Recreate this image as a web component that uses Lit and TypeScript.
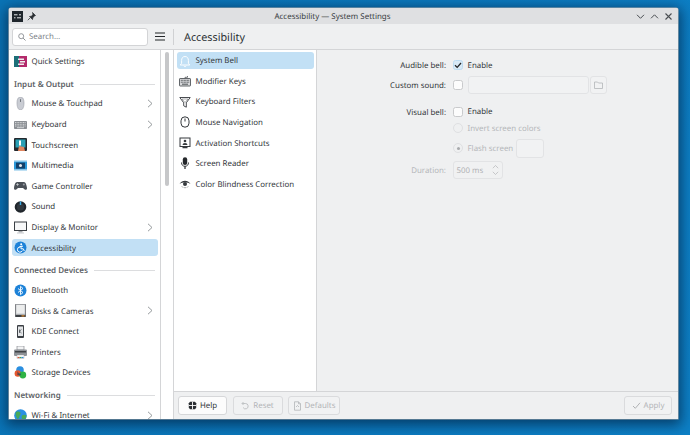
import { LitElement, html, css, svg } from "lit";
import { customElement } from "lit/decorators.js";

const sideIcons: Record<string, unknown> = {
  quick: svg`<path d="M0 1h13v11H0z" fill="#1e9a8c" opacity=".55"/><path d="M5 1h8v11H5z" fill="#b32a6b"/><path d="M0 1h5v11H0z" fill="#1c6f78"/><path d="M4 3.500h6v1.400H4zM6 6h5v1.400H6zM4 8.500h6v1.400H4z" fill="#eee"/>`,
  mouse: svg`<path d="M6.500 0C4 0 3 2.500 3 6s1 7 3.500 7S10 9.500 10 6 9 0 6.500 0z" fill="#c9ccd3" stroke="#9a9ea7" stroke-width=".6"/><rect x="6" y="2" width="1" height="3" rx=".5" fill="#6f747c"/>`,
  keyboard: svg`<rect x="0" y="3" width="13" height="8" rx=".8" fill="#8b8f94"/><path d="M1 4.500h11M1 6.300h11M1 8h11" stroke="#e6e7e9" stroke-width=".8" stroke-dasharray="1 .6"/><path d="M3 9.700h7" stroke="#e6e7e9" stroke-width=".8"/>`,
  touch: svg`<rect x="0" y="0" width="13" height="13" rx="1" fill="#23282d"/><rect x="1.500" y="1.500" width="10" height="8" fill="#2aa0b5"/><rect x="5" y="2.500" width="2" height="5" fill="#fff"/><path d="M4 13l1-5 5 1 1 4z" fill="#e0855e"/>`,
  media: svg`<rect x="0" y="1" width="13" height="11" fill="#2b98d8"/><rect x="0" y="1" width="13" height="1.600" fill="#fff" opacity=".7"/><rect x="0" y="10.400" width="13" height="1.600" fill="#fff" opacity=".7"/><rect x="2" y="3.600" width="9" height="6" fill="#13406a"/><circle cx="6.500" cy="6.600" r="1.500" fill="#e6e9ec"/>`,
  game: svg`<path d="M3 3h7c1.600 0 2.600 2.800 3 6 .2 1.800-1.400 2.400-2.600 1.200L9 9H4l-1.400 1.200C1.400 11.400-.2 10.800 0 9c.4-3.200 1.400-6 3-6z" fill="#4b5158"/><circle cx="9.800" cy="5.500" r="1" fill="#9aa0a6"/><path d="M2.300 5.500h2.400M3.500 4.300v2.400" stroke="#c5c8cb" stroke-width=".9"/>`,
  sound: svg`<circle cx="6.500" cy="7" r="5.800" fill="#20262c"/><circle cx="6.500" cy="7" r="3.600" fill="#31383f"/><path d="M6.500 1.500v3.500" stroke="#3daee9" stroke-width="1.400"/>`,
  display: svg`<rect x=".5" y="1" width="12" height="8.500" fill="#f7f8f9" stroke="#3a3f44" stroke-width="1"/><rect x="4.500" y="10" width="4" height="1.500" fill="#a8abaf"/><rect x="3" y="11.500" width="7" height="1" fill="#c8cacd"/>`,
  access: svg`<circle cx="6.500" cy="6.500" r="6" fill="#1d82d8"/><circle cx="7.200" cy="3.300" r="1" fill="#fff"/><path d="M7 4.800v3h2.300l1 2.200M6 6a2.600 2.600 0 1 0 2.400 3.600M5.500 5.600l3.500-.4" fill="none" stroke="#fff" stroke-width="1"/>`,
  bluetooth: svg`<circle cx="6.500" cy="6.500" r="6" fill="#1d82d8"/><path d="M4 4.500l5 4-2.500 2.200V2.300L9 4.500l-5 4" fill="none" stroke="#fff" stroke-width=".9"/>`,
  disks: svg`<rect x="1.500" y="0" width="10" height="13" rx=".6" fill="#c9cbce" stroke="#54585c" stroke-width=".7"/><rect x="2.500" y="1" width="8" height="8.500" fill="#eceded"/><rect x="1.500" y="10.800" width="10" height="2.200" fill="#3d4145"/><rect x="7.500" y="11.300" width="3" height="1.200" fill="#e08a2f"/>`,
  connect: svg`<rect x="3" y="0" width="7" height="13" rx="1" fill="#3c4045"/><rect x="4" y="1.500" width="5" height="9.500" fill="#e4e6e8"/><path d="M5.500 4.500v3.500M5.500 6.200l2-1.800M5.500 6.200l2 1.800" stroke="#3c4045" stroke-width=".7" fill="none"/>`,
  printer: svg`<rect x="3" y="0" width="7" height="4" fill="#f2f3f4" stroke="#777b80" stroke-width=".6"/><rect x="0" y="3.500" width="13" height="6.500" rx="1" fill="#8e9297"/><rect x="1" y="5" width="11" height="1.500" fill="#3f4347"/><rect x="3" y="9" width="7" height="3.500" fill="#fff" stroke="#999" stroke-width=".4"/><path d="M3.500 11.500h2" stroke="#e0553c" stroke-width="1.200"/><path d="M5.500 11.500h2" stroke="#3fa14a" stroke-width="1.200"/><path d="M7.500 11.500h2" stroke="#2c88d8" stroke-width="1.200"/>`,
  storage: svg`<circle cx="6" cy="4" r="3.800" fill="#2b8fe0"/><circle cx="3.800" cy="7.500" r="3.200" fill="#e4572e"/><circle cx="8.800" cy="9" r="3.400" fill="#2fb344"/><path d="M3.500 5.300a3.800 3.800 0 0 0 3.700 2.500l-.8 1.700-3.100-.6z" fill="#1f3a5c" opacity=".7"/>`,
  wifi: svg`<circle cx="6.500" cy="6.500" r="6.300" fill="#2a8fe2"/><path d="M2 3c2-.8 3.500-.5 4.500.8.500 1.500-.8 2.200-1 3.500-.2 1.400-1 2.500-1.800 2.800C2.500 8.500.8 6 2 3zM8 6.500c1.500-1 3.200-.9 4.500 0 0 2.600-1.600 4.800-3.500 5.600C8.500 10.500 7 8.500 8 6.500z" fill="#47a95b"/>`,
};

const midIcons: Record<string, unknown> = {
  bell: svg`<path d="M6 1.500c2.400 0 3.400 1.800 3.400 4v2.800L10.800 10H1.200l1.400-1.700V5.500c0-2.200 1-4 3.400-4zM4.800 10.800a1.300 1.300 0 0 0 2.400 0" fill="none" stroke="#fbfdfe" stroke-width="1"/>`,
  keys: svg`<path d="M6 3.500V2.300h2.500V1" fill="none" stroke="#3f4448" stroke-width=".7"/><rect x=".5" y="3.500" width="11" height="7.500" rx=".6" fill="#d8d9db" stroke="#3f4448" stroke-width=".8"/><path d="M1.800 5.300h8.400M1.800 7.200h8.400" stroke="#3f4448" stroke-width=".9" stroke-dasharray="1 .5"/><path d="M3 9.200h6" stroke="#3f4448" stroke-width=".9"/>`,
  filter: svg`<path d="M.8 1.500h10.400L7.300 6.800v4.400L4.700 9.800V6.800z" fill="none" stroke="#35393d" stroke-width=".9"/><path d="M3 3h6l-3 3.600z" fill="#fff" stroke="#35393d" stroke-width=".4"/>`,
  mouse: svg`<rect x="2" y=".8" width="8" height="10.400" rx="4" fill="none" stroke="#35393d" stroke-width="1"/><path d="M6 2.500v3" stroke="#35393d" stroke-width="1"/>`,
  act: svg`<rect x="1" y="1" width="10" height="8.500" fill="none" stroke="#35393d" stroke-width="1"/><circle cx="6" cy="4" r="1.300" fill="#35393d"/><path d="M3.500 8a2.500 2 0 0 1 5 0z" fill="#35393d"/><path d="M3.500 10h5v1.200h-5z" fill="#35393d"/>`,
  mic: svg`<rect x="3.800" y=".3" width="4.400" height="7.700" rx="2.200" fill="#24282b"/><path d="M2.500 5.500c0 2.400 1.400 3.800 3.500 3.800s3.500-1.400 3.500-3.800" fill="none" stroke="#24282b" stroke-width=".9"/><path d="M6 9.300V12" stroke="#24282b" stroke-width="1.200"/>`,
  eye: svg`<path d="M.5 6C2 3.800 3.800 2.800 6 2.800S10 3.800 11.500 6C10 5 8 4.200 6 4.200S2 5 .5 6z" fill="#35393d"/><circle cx="6" cy="6" r="2" fill="#35393d"/><path d="M3 8.500l1 1M9 8.500l-1 1M6 9v1.200" stroke="#35393d" stroke-width=".7"/>`,
};

type Item = { h?: string; i?: string; t?: string; more?: boolean; sel?: boolean };
const side: Item[] = [
  { i: "quick", t: "Quick Settings" },
  { h: "Input & Output" },
  { i: "mouse", t: "Mouse & Touchpad", more: true },
  { i: "keyboard", t: "Keyboard", more: true },
  { i: "touch", t: "Touchscreen" },
  { i: "media", t: "Multimedia" },
  { i: "game", t: "Game Controller" },
  { i: "sound", t: "Sound" },
  { i: "display", t: "Display & Monitor", more: true },
  { i: "access", t: "Accessibility", sel: true },
  { h: "Connected Devices" },
  { i: "bluetooth", t: "Bluetooth" },
  { i: "disks", t: "Disks & Cameras", more: true },
  { i: "connect", t: "KDE Connect" },
  { i: "printer", t: "Printers" },
  { i: "storage", t: "Storage Devices" },
  { h: "Networking" },
  { i: "wifi", t: "Wi-Fi & Internet", more: true },
];
const mid: Item[] = [
  { i: "bell", t: "System Bell", sel: true },
  { i: "keys", t: "Modifier Keys" },
  { i: "filter", t: "Keyboard Filters" },
  { i: "mouse", t: "Mouse Navigation" },
  { i: "act", t: "Activation Shortcuts" },
  { i: "mic", t: "Screen Reader" },
  { i: "eye", t: "Color Blindness Correction" },
];

@customElement("app-root")
export class AppRoot extends LitElement {
  static styles = css`
    :host { display: block; width: 690px; height: 435px; overflow: hidden; box-sizing: border-box;
      padding: 8px 12px 16px 9px; font-family: "Noto Sans", sans-serif; font-size: 7.9px; color: #33373b;
      text-rendering: geometricPrecision; background: linear-gradient(100deg, #0a74b6 0%, #0b7abf 60%, #0d80c6 100%); }
    .window { height: 411px; display: flex; flex-direction: column; overflow: hidden; border-radius: 2px 2px 0 0;
      background: #eff0f1; box-shadow: 0 0 0 .6px #a4a9ae, 0 3px 13px 3px rgba(0,22,50,.62); }
    .titlebar { height: 16px; flex: none; background: #dfe0e2; display: flex; align-items: center; padding: 0 5px 0 3px; color: #3a3e42; font-size: 7.95px; }
    .titlebar svg { flex: none; display: block; }
    .pin { margin-left: 4px; }
    .wintitle { flex: 1; text-align: center; padding: 1px 7px 0 0; }
    .ctrls { display: flex; gap: 5px; align-items: center; }
    .toolbar { height: 25px; flex: none; display: flex; align-items: center; border-bottom: 1px solid #d4d5d7; box-sizing: content-box; }
    .tb-left { width: 164px; flex: none; display: flex; align-items: center; padding-left: 3px; box-sizing: border-box; }
    .search { width: 136px; height: 18px; background: #fff; border: 1px solid #d3d4d6; border-radius: 3px; box-sizing: border-box; display: flex; align-items: center; gap: 3px; padding-left: 5px; color: #7d8287; margin-right: 7px; }
    .search span { padding-top: 1px; }
    .burger { display: block; }
    .tb-sep { width: 1px; height: 16px; background: #d0d1d3; flex: none; }
    .tb-title { font-size: 10.8px; color: #2c3034; margin-left: 10px; padding-top: 1px; }
    .content { flex: 1; min-height: 0; display: flex; }
    .sidebar { width: 151px; flex: none; background: #fff; padding: 2.500px 2.500px 0; box-sizing: border-box; overflow: hidden; }
    .row { height: 17px; margin-bottom: 3.600px; display: flex; align-items: center; border-radius: 3px; white-space: nowrap; }
    .row.sel { background: #c2e0f5; }
    .sidebar .row svg.ic { width: 13px; height: 13px; margin-left: 2.500px; margin-right: 4.500px; flex: none; }
    .row .t { flex: 1; padding-top: 1.500px; }
    .chev { width: 6px; height: 9px; margin-right: 4.500px; flex: none; }
    .heading { height: 22px; display: flex; align-items: center; gap: 6px; padding: 0 2.500px; font-weight: 600; font-size: 8.05px; color: #5c6165; box-sizing: border-box; }
    .heading i { flex: 1; height: 1px; background: #dcdddf; }
    .scroll { width: 12px; flex: none; background: #fff; border-left: 1px solid #d4d5d7; border-right: 1px solid #d4d5d7; box-sizing: content-box; padding-top: 2px; }
    .scroll div { width: 4.500px; height: 134px; background: #c6c7c9; border-radius: 3px; margin-left: 3.500px; }
    .main { flex: 1; min-width: 0; display: flex; flex-direction: column; }
    .panes { flex: 1; min-height: 0; display: flex; }
    .mid { width: 143px; flex: none; background: #fff; border-right: 1px solid #d4d5d7; padding: 2px 2.500px 0; box-sizing: border-box; }
    .mid .row svg.ic { width: 12px; height: 12px; margin: 0 4.500px 0 2.500px; flex: none; }
    .form { flex: 1; padding: 6px 0 0; display: grid; grid-template-columns: 129px 1fr; column-gap: 7px; align-content: start; }
    .lab { text-align: right; height: 18px; line-height: 20px; }
    .dis { color: #b5b7ba; }
    .f { display: flex; align-items: center; height: 18px; gap: 4.500px; }
    .f .x { padding-top: 1px; }
    .m2 { margin-top: 2px; }
    .gap { margin-top: 8.500px; }
    .thin { height: 15px; }
    .m35 { margin-top: 3.500px; }
    .m4 { margin-top: 4px; }
    .cb { width: 10px; height: 10px; border: 1px solid #c9cacc; border-radius: 2.500px; background: #fcfcfc; box-sizing: border-box; flex: none; position: relative; display: block; }
    .cb.on { background: #d7e9f6; border-color: #bcdcf2; }
    .cb.on svg { position: absolute; left: -1px; top: -1px; }
    .rb { width: 10px; height: 10px; border: 1px solid #dfe0e2; border-radius: 50%; box-sizing: border-box; flex: none; display: flex; align-items: center; justify-content: center; }
    .rb b { width: 3px; height: 3px; border-radius: 50%; background: #a8aaad; }
    .field { border: 1px solid #e2e3e5; border-radius: 3px; background: #f1f2f3; box-sizing: border-box; }
    .snd { width: 121px; height: 18px; }
    .fb { width: 17px; height: 18px; display: flex; align-items: center; justify-content: center; margin-left: -3.500px; }
    .swatch { width: 28px; height: 19px; margin-left: -1.500px; }
    .spin { width: 50px; height: 18px; display: flex; align-items: center; justify-content: space-between; padding: 0 3px; margin-left: -.5px; background: #f0f1f2; color: #b0b2b5; }
    .footer { height: 27px; flex: none; border-top: 1px solid #d4d5d7; display: flex; align-items: center; padding: 0 6px 0 4px; gap: 5.500px; box-sizing: content-box; }
    .btn { height: 19px; display: flex; align-items: center; justify-content: center; gap: 3px; border: 1px solid #dadbdd; border-radius: 3px; background: #f1f2f3; box-sizing: border-box; color: #b3b5b8; }
    .btn span { padding-top: 1px; }
    .btn.help { width: 49px; background: #fcfcfc; color: #33373b; border-color: #d6d7d9; }
    .btn.reset { width: 50px; }
    .btn.def { width: 52px; }
    .btn.apply { width: 48px; margin-left: auto; }
  `;

  chev() {
    return html`<svg class="chev" viewBox="0 0 6 9"><path d="M1 .8l4 3.700-4 3.700" fill="none" stroke="#8a8e92" stroke-width=".9"/></svg>`;
  }

  row(it: Item, icons: Record<string, unknown>, vb: string) {
    return html`<div class="row ${it.sel ? "sel" : ""}">
      <svg class="ic" viewBox=${vb}>${icons[it.i!]}</svg>
      <span class="t">${it.t}</span>
      ${it.more ? this.chev() : ""}
    </div>`;
  }

  render() {
    return html`<div class="window">
      <div class="titlebar">
        <svg width="11" height="11" viewBox="0 0 11 11"><rect width="11" height="11" fill="#1f262c"/><path d="M2 3.800h3.500M7 3.800h2M2 6.800h1.500M5 6.800h4" stroke="#e8eaec" stroke-width="1"/></svg>
        <svg class="pin" width="9" height="9" viewBox="0 0 9 9"><path d="M5.500.5l3 3-1 .5-1.700 1.700-.3 1.800-3-3 1.800-.3L6 2.500zM3 6L.8 8.200" fill="#2a2e32" stroke="#2a2e32" stroke-width=".7"/></svg>
        <div class="wintitle">Accessibility — System Settings</div>
        <div class="ctrls">
          <svg width="9" height="9" viewBox="0 0 9 9"><path d="M1 2.800l3.500 3.500L8 2.800" fill="none" stroke="#4a4e52" stroke-width="1"/></svg>
          <svg width="9" height="9" viewBox="0 0 9 9"><path d="M1 6.300l3.500-3.500L8 6.300" fill="none" stroke="#4a4e52" stroke-width="1"/></svg>
          <svg width="9" height="9" viewBox="0 0 9 9"><path d="M1.500 1.500l6 6M7.500 1.500l-6 6" fill="none" stroke="#4a4e52" stroke-width="1.100"/></svg>
        </div>
      </div>
      <div class="toolbar">
        <div class="tb-left">
          <div class="search">
            <svg width="8" height="8" viewBox="0 0 8 8"><circle cx="3.200" cy="3.200" r="2.500" fill="none" stroke="#7d8287" stroke-width=".8"/><path d="M5.100 5.100L7.500 7.500" stroke="#7d8287" stroke-width=".9"/></svg>
            <span>Search…</span>
          </div>
          <svg class="burger" width="10" height="9" viewBox="0 0 10 9"><path d="M0 1h10M0 4.500h10M0 8h10" stroke="#232629" stroke-width="1.100"/></svg>
        </div>
        <div class="tb-sep"></div>
        <div class="tb-title">Accessibility</div>
      </div>
      <div class="content">
        <div class="sidebar">
          ${side.map((it) =>
            it.h
              ? html`<div class="heading"><span>${it.h}</span><i></i></div>`
              : this.row(it, sideIcons, "0 0 13 13"),
          )}
        </div>
        <div class="scroll"><div></div></div>
        <div class="main">
          <div class="panes">
            <div class="mid">${mid.map((it) => this.row(it, midIcons, "0 0 12 12"))}</div>
            <div class="form">
              <div class="lab">Audible bell:</div>
              <div class="f"><span class="cb on"><svg width="10" height="10" viewBox="0 0 10 10"><path d="M2 5.200l2.200 2.200L8 3" fill="none" stroke="#232629" stroke-width="1.300"/></svg></span><span class="x">Enable</span></div>
              <div class="lab m2">Custom sound:</div>
              <div class="f m2"><span class="cb"></span><span class="field snd"></span><span class="field fb"><svg width="9" height="8" viewBox="0 0 9 8"><path d="M.5 1h3l1 1h4v5.500h-8z" fill="none" stroke="#b3b5b8" stroke-width=".8"/></svg></span></div>
              <div class="lab gap">Visual bell:</div>
              <div class="f gap"><span class="cb"></span><span class="x">Enable</span></div>
              <div class="thin"></div>
              <div class="f dis thin"><span class="rb"></span><span class="x">Invert screen colors</span></div>
              <div class="lab m35"></div>
              <div class="f dis m35"><span class="rb"><b></b></span><span class="x">Flash screen</span><span class="field swatch"></span></div>
              <div class="lab dis m4">Duration:</div>
              <div class="f dis m4"><span class="field spin"><span class="x">500 ms</span><svg width="7" height="12" viewBox="0 0 7 12"><path d="M.8 4.200L3.500 1.500l2.700 2.700M.8 7.800l2.700 2.700 2.700-2.700" fill="none" stroke="#b3b5b8" stroke-width=".7"/></svg></span></div>
            </div>
          </div>
          <div class="footer">
            <div class="btn help"><svg width="9" height="9" viewBox="0 0 9 9"><path d="M2 .8h5l1.200 1.500v4.400L7 8.200H2L.8 6.700V2.300z" fill="#2a2e32"/><path d="M.8 4.500h7.400M4.500 .8v7.400" stroke="#fcfcfc" stroke-width=".9"/></svg><span>Help</span></div>
            <div class="btn reset"><svg width="9" height="9" viewBox="0 0 9 9"><path d="M2.500 1L1 2.500l1.500 1.500M1.200 2.500h3.300a2.700 2.700 0 1 1-2.400 4" fill="none" stroke="#b3b5b8" stroke-width=".8"/></svg><span>Reset</span></div>
            <div class="btn def"><svg width="9" height="10" viewBox="0 0 9 10"><path d="M1.500.8h4l2 2v6.400h-6zM5.500.8v2h2M3 6l1.500-1.500L6 6" fill="none" stroke="#b3b5b8" stroke-width=".8"/></svg><span>Defaults</span></div>
            <div class="btn apply"><svg width="9" height="9" viewBox="0 0 9 9"><path d="M1 5l2.300 2.300L8 1.800" fill="none" stroke="#a8aaad" stroke-width=".9"/></svg><span>Apply</span></div>
          </div>
        </div>
      </div>
    </div>`;
  }
}
